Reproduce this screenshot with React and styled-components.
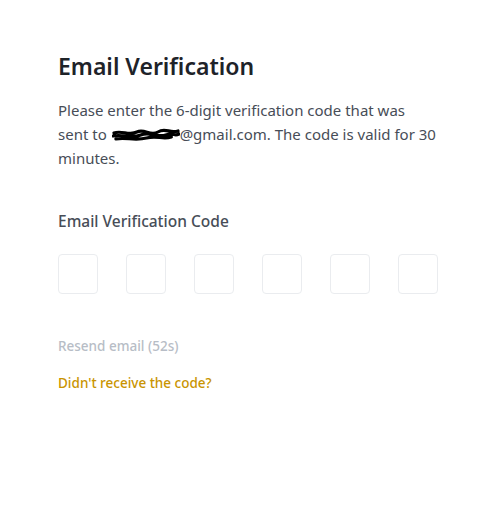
import React from 'react';
import styled, { createGlobalStyle } from 'styled-components';

const GlobalStyle = createGlobalStyle`
  body {
    margin: 0;
    background: #ffffff;
    font-family: "Noto Sans", "Liberation Sans", sans-serif;
  }
`;

const Page = styled.div`
  width: 504px;
  height: 510px;
  box-sizing: border-box;
  padding: 50px 66px 0 58px;
  background: #ffffff;
`;

const Title = styled.h1`
  margin: 0;
  font-size: 23px;
  line-height: 32px;
  font-weight: 600;
  color: #1e2329;
`;

const Description = styled.p`
  margin: 16px 0 0;
  font-size: 15px;
  line-height: 24px;
  color: #474d57;
`;

const Scribble = styled.svg`
  display: inline-block;
  vertical-align: -2px;
  width: 68px;
  height: 14px;
  margin-left: 1px;
`;

const Label = styled.div`
  margin-top: 40px;
  font-size: 15.5px;
  line-height: 22px;
  font-weight: 500;
  color: #474d57;
`;

const CodeRow = styled.div`
  margin-top: 22px;
  display: flex;
  justify-content: space-between;
  width: 380px;
`;

const CodeBox = styled.input`
  width: 40px;
  height: 40px;
  box-sizing: border-box;
  border: 1px solid #eaecef;
  border-radius: 4px;
  background: #ffffff;
  padding: 0;
  text-align: center;
  font-size: 18px;
  outline: none;
`;

const Resend = styled.div`
  margin-top: 42px;
  font-size: 13.5px;
  line-height: 20px;
  font-weight: 500;
  color: #b7bdc6;
`;

const HelpLink = styled.a`
  display: block;
  margin-top: 17px;
  font-size: 13.5px;
  line-height: 20px;
  font-weight: 500;
  color: #c99400;
  text-decoration: none;
  cursor: pointer;
`;

const Redacted = () => (
  <Scribble viewBox="0 0 71 14" preserveAspectRatio="none">
    <path
      d="M2 5 C10 2 18 8 26 4 S40 9 48 4 S60 6 69 3 M1 8 C12 6 20 11 30 7 S46 10 56 7 S64 9 70 6 M4 11 C14 9 24 13 36 10 S52 12 62 9"
      stroke="#000"
      strokeWidth="3.2"
      fill="none"
      strokeLinecap="round"
    />
  </Scribble>
);

export default function App() {
  const digits = [0, 1, 2, 3, 4, 5];
  return (
    <Page>
      <GlobalStyle />
      <Title>Email Verification</Title>
      <Description>
        Please enter the 6-digit verification code that was sent to <Redacted />@gmail.com. The code is valid for 30 minutes.
      </Description>
      <Label>Email Verification Code</Label>
      <CodeRow>
        {digits.map((d) => (
          <CodeBox key={d} maxLength={1} />
        ))}
      </CodeRow>
      <Resend>Resend email (52s)</Resend>
      <HelpLink>Didn't receive the code?</HelpLink>
    </Page>
  );
}
